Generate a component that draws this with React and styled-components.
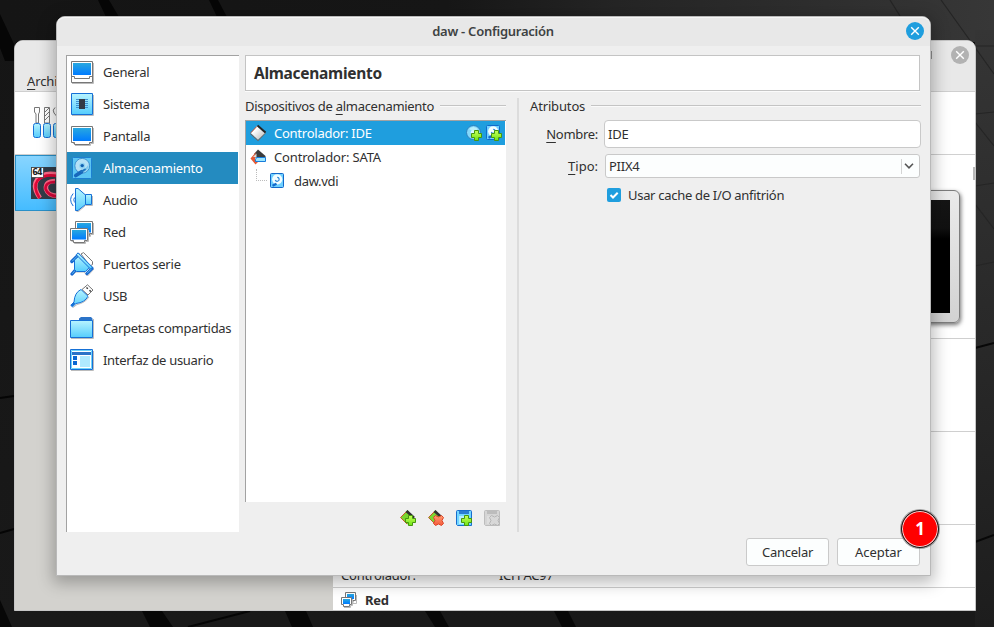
import React from "react";
import styled, { createGlobalStyle, css } from "styled-components";

const Global = createGlobalStyle`
  *, *::before, *::after { box-sizing: border-box; }
  body { margin: 0; overflow: hidden; }
`;

/* ---------- text ---------- */
const Text = styled.span`
  letter-spacing: ${(p) => p.$track ?? -0.2}px;
  font-size: ${(p) => p.$size ?? 13}px;
  font-weight: ${(p) => p.$weight ?? 400};
  white-space: pre;
`;
const Mnemonic = styled.span`
  text-decoration: underline;
  text-decoration-thickness: 1px;
  text-underline-offset: 3px;
`;

/* ---------- desktop ---------- */
const Desktop = styled.main`
  position: relative;
  width: 994px;
  height: 627px;
  overflow: hidden;
  color: #303030;
  font: 13px/18px "Noto Sans", "Open Sans", sans-serif;
  background: linear-gradient(180deg, #151515, #191919);
`;
const Wallpaper = styled.svg`
  position: absolute;
  inset: 0;
`;

/* ---------- manager window ---------- */
const Manager = styled.section`
  position: absolute;
  left: 14px;
  top: 40px;
  width: 962px;
  height: 571px;
  display: flex;
  flex-direction: column;
  border: 1px solid #c6c6c6;
  border-radius: 9px 9px 0 0;
  background: #fff;
  overflow: hidden;
`;
const ManagerTop = styled.header`
  flex: none;
  height: 51px;
  display: flex;
  justify-content: space-between;
  background: #e8e8e8;
  border-bottom: 1px solid #cfcfcf;
  padding: 5px 6px 0 12px;
`;
const MenuEntry = styled.div`
  padding-top: 26px;
`;
const ManagerButtons = styled.div`
  display: flex;
  gap: 19px;
  align-items: flex-start;
`;
const MaximizeEdge = styled.i`
  width: 1px;
  height: 8px;
  margin-top: 5px;
  background: #909090;
`;
const ManagerTools = styled.div`
  flex: none;
  height: 63px;
  padding: 15px 0 0 18px;
  border-bottom: 1px solid #d0d0d0;
  background: #fff;
`;
const ManagerBody = styled.div`
  flex: 1;
  display: grid;
  grid-template-columns: 318px 1fr;
`;
const MachineList = styled.div`
  background: #d3d2ce;
`;
const Machine = styled.div`
  height: 56px;
  padding: 11px 0 0 15px;
  border: 1px solid #2990c8;
  background: linear-gradient(#88d5ff, #45bcff);
`;
const Details = styled.div`
  display: flex;
  flex-direction: column;
`;
const Section = styled.div`
  flex: none;
  position: relative;
  height: ${(p) => p.$h}px;
  border-bottom: ${(p) => (p.$last ? "0" : "1px solid #cfcfcf")};
`;
const ScrollMark = styled.i`
  position: absolute;
  right: 0;
  top: 12px;
  width: 2px;
  height: 13px;
  background: #b8b8b8;
`;
const Preview = styled.div`
  width: 150px;
  height: 133px;
  margin: 35px 15px 0 auto;
  padding: 9px;
  border: 1px solid #7c7c7c;
  border-radius: 6px;
  background: linear-gradient(#ebebeb, #d2d2d2);
  box-shadow: 1px 2px 4px rgba(0, 0, 0, 0.55);
`;
const Screen = styled.div`
  height: 100%;
  border-left: 1px solid #222;
  background: linear-gradient(#151515, #111 25%, #000 35%);
`;
const DetailRow = styled.div`
  position: absolute;
  left: 8px;
  bottom: 3px;
  display: grid;
  grid-template-columns: 158px auto;
`;
const SectionTitle = styled.div`
  display: flex;
  align-items: center;
  gap: 8px;
  padding: 3px 0 0 8px;
`;

/* ---------- dialog ---------- */
const Dialog = styled.section`
  position: absolute;
  left: 56px;
  top: 16px;
  width: 875px;
  height: 560px;
  display: flex;
  flex-direction: column;
  border: 1px solid #b9b9b9;
  border-radius: 9px 9px 0 0;
  background: #efefef;
  box-shadow: 0 4px 16px 3px rgba(0, 0, 0, 0.27);
`;
const TitleBar = styled.header`
  flex: none;
  height: 29px;
  display: grid;
  grid-template-columns: 1fr auto 1fr;
  align-items: center;
  padding: 0 6px 0 5px;
  border-radius: 8px 8px 0 0;
  background: #e8e8e8;
  box-shadow: inset 0 1px #f5f5f5;
`;
const CloseButton = styled.button`
  display: block;
  justify-self: end;
  grid-column: 3;
  width: 18px;
  height: 18px;
  margin-top: -1px;
  padding: 0;
  border: 0;
  border-radius: 50%;
  background: ${(p) => (p.$active ? "#1f9ede" : "#b2b2b2")};
`;
const ManagerClose = styled(CloseButton)`
  margin-top: 0;
`;
const WindowTitle = styled.div`
  grid-column: 2;
  padding-bottom: 2px;
  color: #3e4243;
`;
const DialogBody = styled.div`
  display: grid;
  grid-template-columns: 173px 676px;
  gap: 6px;
  height: 486px;
  padding: 9px 9px 0;
`;
const Sidebar = styled.nav`
  border: solid #a2a2a2;
  border-width: 1px 0 0 1px;
  padding-right: 1px;
  background: #fff;
`;
const NavItem = styled.div`
  display: flex;
  align-items: center;
  gap: 9px;
  height: 32px;
  padding-left: 3px;
  ${(p) => p.$selected && css`background: #248bc0; color: #fff;`}
`;
const Main = styled.div`
  display: flex;
  flex-direction: column;
  gap: 7px;
`;
const PageHeader = styled.div`
  flex: none;
  display: flex;
  align-items: center;
  height: 36px;
  margin-right: 1px;
  padding-left: 8px;
  border: 1px solid #c4c4c4;
  background: #fff;
  box-shadow: 0 1px #fbfbfb;
`;
const Panes = styled.div`
  flex: 1;
  display: flex;
  gap: 11px;
`;
const Divider = styled.div`
  width: 2px;
  background: #dcdcdc;
`;
const DevicePane = styled.div`
  width: 261px;
`;
const AttributePane = styled.div`
  width: 391px;
`;
const GroupTitle = styled.div`
  display: flex;
  align-items: center;
  gap: 6px;
  height: 16px;
  margin-bottom: 6px;
  &::after {
    content: "";
    flex: 1;
    height: 2px;
    margin-top: -1px;
    border-top: 1px solid #c4c4c4;
    border-bottom: 1px solid #fafafa;
  }
`;
const Tree = styled.div`
  height: 382px;
  border: solid #a2a2a2;
  border-width: 1px 0 0 1px;
  padding-right: 1px;
  background: #fff;
`;
const TreeRow = styled.div`
  display: flex;
  align-items: center;
  gap: 8px;
  height: 24px;
  padding: 0 3px 0 4px;
  ${(p) => p.$selected && css`background: #1f9ede; color: #fff;`}
`;
const RowActions = styled.div`
  display: flex;
  gap: 4px;
  margin-left: auto;
`;
const Branch = styled.i`
  align-self: flex-start;
  width: 11px;
  height: 12px;
  margin: 0 -5px 0 6px;
  border: dotted #bcbcbc;
  border-width: 0 0 1px 1px;
`;
const DeviceTools = styled.div`
  display: flex;
  justify-content: flex-end;
  gap: 12px;
  padding: 8px 6px 0 0;
`;
const Form = styled.div`
  display: grid;
  grid-template-columns: 68px 317px;
  column-gap: 6px;
  row-gap: 6px;
  align-items: center;
`;
const FieldLabel = styled.label`
  text-align: right;
`;
const Field = styled.div`
  display: flex;
  align-items: center;
  height: 28px;
  padding-left: 3px;
  border: 1px solid #c9c9c9;
  border-radius: 4px;
  background: #fff;
`;
const Combo = styled(Field)`
  justify-content: space-between;
  height: 24px;
  margin: 0 1px;
  border-radius: 3px;
  background: #fcfefe;
`;
const ComboArrow = styled.span`
  display: flex;
  align-items: center;
  justify-content: center;
  width: 18px;
  height: 15px;
  padding-right: 4px;
  border-left: 1px solid #d4d4d4;
`;
const CheckRow = styled.div`
  grid-column: 2;
  display: flex;
  align-items: center;
  gap: 7px;
  height: 22px;
  padding-left: 3px;
`;
const CheckBox = styled.span`
  display: flex;
  width: 14px;
  height: 14px;
  border-radius: 2px;
  background: #1f9ede;
`;
const Footer = styled.footer`
  display: flex;
  justify-content: flex-end;
  gap: 8px;
  padding: 6px 10px 0 0;
`;
const Button = styled.button`
  width: 83px;
  height: 28px;
  padding: 0;
  border: 1px solid #cacaca;
  border-radius: 3px;
  color: inherit;
  font: inherit;
  background: #fcfefe;
`;
const StepMarker = styled.div`
  position: absolute;
  left: 901px;
  top: 510px;
  width: 38px;
  height: 38px;
  display: flex;
  align-items: center;
  justify-content: center;
  padding-bottom: 1px;
  border: 1px solid #1a1a1a;
  border-radius: 50%;
  background: #f00;
  color: #fff;
  box-shadow: inset 0 0 0 1px #f3dada, 0 0 0 1px rgba(110, 110, 110, 0.6);
`;

/* ---------- icons ---------- */
const Svg = styled.svg`
  display: block;
  flex: none;
  overflow: visible;
`;
const Icon = ({ size = 24, children }) => (
  <Svg width={size} height={size} viewBox={`0 0 ${size} ${size}`} fill="none">{children}</Svg>
);
const Defs = () => (
  <Wallpaper width="0" height="0">
    <defs>
      <linearGradient id="screen" x2="0" y2="1"><stop stopColor="#28a8e0" /><stop offset="1" stopColor="#007bff" /></linearGradient>
      <linearGradient id="aqua" x2="0" y2="1"><stop stopColor="#b8f4ff" /><stop offset="1" stopColor="#55cdfd" /></linearGradient>
      <linearGradient id="chip" x2="1" y2="1"><stop offset=".3" stopColor="#fff" /><stop offset="1" stopColor="#b4b4b4" /></linearGradient>
      <linearGradient id="green" x2="0" y2="1"><stop stopColor="#c8ff58" /><stop offset="1" stopColor="#6ee416" /></linearGradient>
      <linearGradient id="red" x2="0" y2="1"><stop stopColor="#ff9a70" /><stop offset="1" stopColor="#f4593a" /></linearGradient>
    </defs>
  </Wallpaper>
);
const Blue = { stroke: "#1670d6", fill: "url(#aqua)" };
const Monitor = () => (
  <>
    <path d="M2.500 13.500H5.500V15.500H16.500V13.500H19.500V2" stroke="#b9b9b9" />
    <path d="M1.500 .5H18.500V12.500H15.500V14.500H4.500V12.500H1.500Z" fill="#fff" stroke="#777" />
    <path d="M3 2H17V11.500H3Z" fill="url(#screen)" />
  </>
);
const GeneralIcon = () => (
  <Icon>
    <path d="M2 23.500H23.500V3" stroke="#bbb" />
    <path d="M1.500 1.500H22.500V22.500H1.500Z" fill="#fff" stroke="#777" />
    <path d="M3 3H21V15H3Z" fill="url(#screen)" />
    <path d="M1.500 16.500H4.500V18.500H19.500V16.500H22.500" stroke="#777" />
  </Icon>
);
const SystemIcon = () => (
  <Icon>
    <path d="M2 23.500H23.500V3" stroke="#bbb" />
    <path d="M1.500 1.500H22.500V22.500H1.500Z" {...Blue} />
    <path d="M6 7.500H18M6 9.500H18M6 11.500H18M6 13.500H18M6 15.500H18" stroke="#3d8fd0" />
    <path d="M9 7H15V17H9Z" fill="#333b46" />
  </Icon>
);
const DisplayIcon = () => (
  <Icon>
    <path d="M3 19.500H4M5 21.500H20.500V19.500H23.500V4" stroke="#bbb" />
    <path d="M1.500 2.500H22.500V18.500H19.500V20.500H4.500V18.500H1.500Z" fill="#fff" stroke="#777" />
    <path d="M3 4H21V17H3Z" fill="url(#screen)" />
  </Icon>
);
const DiskIcon = () => (
  <Icon>
    <rect x="2.500" y="1.500" width="19" height="21" rx="1" stroke="#1c80d2" fill="#5cc6f4" />
    <circle cx="12.200" cy="9.800" r="7.400" fill="#b5e1f6" stroke="#3f93d0" />
    <path d="M12.500 13.500Q17 12 18.500 8Q19 14 13.500 16.500Z" fill="#7cc8ee" />
    <circle cx="12.200" cy="9.800" r="3" fill="#8fd2f2" />
    <circle cx="12.200" cy="9.600" r="1.700" fill="#0f5fb0" />
    <path d="M5.800 19.500L11.500 15.800" stroke="#1768bd" strokeWidth="3.800" strokeLinecap="round" />
    <path d="M11.500 15.500L15 13.500" stroke="#1f74c0" strokeWidth="1.800" strokeLinecap="round" />
  </Icon>
);
const AudioIcon = () => (
  <Icon>
    <path d="M6.500 23.500H8.500L15.500 17.500H22.500V8" stroke="#bbb" />
    <path d="M3.200 5.500Q-2 11.500 3.200 18M6 8.500Q1.500 11.500 6 15.500" stroke="#1670d6" />
    <path d="M5.500 .5H8L15.500 7V16.500L8 22.500H5.500Z" {...Blue} />
    <path d="M15.500 6.500H21.500V16.500H15.500Z" {...Blue} />
  </Icon>
);
const NetworkIcon = () => (
  <Icon>
    <g transform="translate(4 1)"><Monitor /></g>
    <g transform="translate(-1 8)"><Monitor /></g>
  </Icon>
);
const SerialIcon = () => (
  <Icon>
    <path d="M11 2L13.500 .6L22.500 9.500V12.500L20 14Z" fill="#fff" stroke="#777" />
    <path d="M2 23L6 20H14L17.500 24L24 17" stroke="#bbb" />
    <path d="M2 22L5 18.500M17 21.500L22 16.300M1.800 9.500L8.500 2.800" stroke="#1466cf" strokeWidth="3.200" strokeLinecap="round" />
    <path d="M2.300 21.700L5 18.500M17 21.300L21.700 16.600M2.200 9.200L8.200 3.200" stroke="#62bdf2" />
    <path d="M4.500 8L9.500 3.500L20.300 14.500L15.500 19.500H6.500L4.500 17.500Z" {...Blue} />
    <path d="M8 .8L22.500 15.300L20.500 17L6.300 2.800Z" {...Blue} />
  </Icon>
);
const UsbIcon = () => (
  <Icon>
    <path d="M17.500 .8L23 6L18 11L12 5.500Z" fill="#fff" stroke="#777" />
    <path d="M16.500 3.500L17.800 4.800M19.500 6.300L20.800 7.600" stroke="#333" strokeWidth="1.400" />
    <path d="M3 23.500L7 20.500Q15 19 19 13" stroke="#bbb" />
    <path d="M11 5.500L18 12.200Q15 18.500 6 19.500L2.500 22.800L.8 21.300L4 18Q4.500 8.500 11 5.500Z" {...Blue} />
    <path d="M1.500 22L4.500 19" stroke="#1670d6" strokeWidth="2" />
  </Icon>
);
const FolderIcon = () => (
  <Icon>
    <path d="M1 22.500H23.500V3" stroke="#bbb" />
    <path d="M9 4V2.500L11 1H21L22.500 2.500V5H9Z" fill="#2b73c8" />
    <path d="M.5 4.500H22.500V21.500H.5Z" {...Blue} />
  </Icon>
);
const InterfaceIcon = () => (
  <Icon>
    <path d="M1 22.500H23.500V3" stroke="#bbb" />
    <path d="M.5 1.500H22.500V21.500H.5Z" fill="#fff" stroke="#1670d6" />
    <path d="M1.500 2.500H21.500V20.500H1.500Z" stroke="#70d4fb" />
    <path d="M2 4H21V7H2Z" fill="#2b73c8" />
    <path d="M3 8H7V12H3ZM3 13H7V17H3Z" fill="#0b67d2" />
    <path d="M10 8H20V19H10Z" fill="#b0eaff" />
  </Icon>
);
const SmallNetworkIcon = () => (
  <Icon size={16}>
    <path d="M6 11.500H15.500V3" stroke="#bbb" />
    <path d="M4.500 .5H14.500V8.500H12V10.500H6V8.500H4.500Z" fill="#fff" stroke="#777" />
    <path d="M6 2H13V7H6Z" fill="url(#screen)" />
    <path d="M3 15.500H9.500V13.500H11.500V7" stroke="#bbb" />
    <path d="M.5 5.500H10.500V12.500H8.500V14.500H2.500V12.500H.5Z" fill="#fff" stroke="#777" />
    <path d="M2 7H9V12H2Z" fill="url(#screen)" />
  </Icon>
);
const Plus = () => (
  <path d="M8.500 5.500H12.500V8.500H15.500V12.500H12.500V15.500H8.500V12.500H5.500V8.500H8.500Z" fill="url(#green)" stroke="#46960f" />
);
const Cross = () => (
  <path d="M7.500 5.500L10.500 7L13.500 5.500L15.500 7.500L14 10.500L15.500 13.500L13.500 15.500L10.500 14L7.500 15.500L5.500 13.500L7 10.500L5.500 7.500Z" fill="url(#red)" stroke="#dc4628" />
);
const IdeIcon = () => (
  <Icon size={16}>
    <path d="M.5 8.500L8 15.500L15.500 7.500" stroke="#666" strokeWidth="1.200" />
    <path d="M7 1L15 8L8 14.800L.8 8Z" fill="url(#chip)" />
    <path d="M7.500 .6L15.500 7.600" stroke="#262626" strokeWidth="2" />
    <path d="M6.800 1.500L.8 7.800" stroke="#c4492a" />
  </Icon>
);
const SataIcon = () => (
  <Icon size={16}>
    <path d="M8 .5L15.500 7V8.500H5L4 5Z" fill="#3c3c3c" />
    <path d="M6 3L.5 9.500L5.500 15.500L8 13L5 10V7Z" fill="#e45a36" />
    <path d="M3 8L6.500 4.500V8Z" fill="#ddd" />
    <path d="M6.500 8.500H15.500V12.500H5.500V10.500Z" fill="#9ce6ff" stroke="#177cdb" />
  </Icon>
);
const SmallDisk = () => (
  <>
    <rect x=".5" y=".5" width="13" height="14" rx="1" fill="#6fd0ff" stroke="#1269cb" />
    <circle cx="7.200" cy="6.300" r="5.100" fill="#f4fdff" />
    <path d="M7.200 4.300A2 2 0 1 1 5.300 7" stroke="#2a86d8" strokeWidth="1.200" />
    <path d="M2.500 12.800L6.500 10.800" stroke="#1269cb" strokeWidth="2.200" />
  </>
);
const AddOpticalIcon = () => (
  <Icon size={16}>
    <circle cx="7.500" cy="7.500" r="7" fill="#84d8fa" stroke="#2b7fbd" />
    <path d="M3 4Q7 0 12 4L8 7Z" fill="#baf0fb" />
    <circle cx="7" cy="7.500" r="2.300" fill="#d8f8ff" />
    <Plus />
  </Icon>
);
const AddDiskIcon = () => <Icon size={16}><SmallDisk /><Plus /></Icon>;
const ControllerBase = () => (
  <>
    <path d="M7.500 0L.5 7.500L7.500 14.500L13 8Z" fill="#7bd62f" />
    <path d="M7.500 0L15 7L13 8.500L5.500 2Z" fill="#303030" />
    <path d="M6 2L.5 7.500L7 14" stroke="#c9552c" />
  </>
);
const Floppy = ({ muted }) => (
  <>
    <path d="M.5 1.500Q.5 .5 1.500 .5H14.500Q15.500 .5 15.500 1.500V15.500H1.500L.5 14.500Z" fill={muted ? "#d5d5d5" : "#72d6ff"} stroke={muted ? "#bdbdbd" : "#176dce"} />
    <path d="M3 1H13V4H3Z" fill={muted ? "#bcbcbc" : "#2b7cd2"} />
    <path d="M3 6H13V14H3Z" fill={muted ? "#dedede" : "#b5eeff"} />
  </>
);
const MutedCross = () => (
  <path d="M7.500 5.500L10.500 7L13.500 5.500L15.500 7.500L14 10.500L15.500 13.500L13.500 15.500L10.500 14L7.500 15.500L5.500 13.500L7 10.500L5.500 7.500Z" fill="#d8d8d8" stroke="#b6b6b6" />
);
const Xmark = () => (
  <Icon size={18}><path d="M5.200 5.200L12.800 12.800M12.800 5.200L5.200 12.800" stroke="#fff" strokeWidth="1.400" /></Icon>
);
const ToolsIcon = () => (
  <Svg width="40" height="32" viewBox="0 0 40 32" fill="none">
    <path d="M1.500 .5H6.500V5L5.500 7V16H3V7L1.500 5Z" fill="#fff" stroke="#777" />
    <path d="M11.500 .5H16.500V16H11.500ZM12 5L16 1M12 9L16 5M12 13L16 9" fill="#fff" stroke="#777" />
    <path d="M22 .5Q19 3 21 6L23.500 9V16" stroke="#777" />
    <rect x=".5" y="16.500" width="7" height="14" rx="2" {...Blue} />
    <rect x="10.500" y="16.500" width="7" height="14" rx="2" {...Blue} />
    <rect x="20.500" y="16.500" width="7" height="14" rx="2" {...Blue} />
  </Svg>
);
const BadgeText = styled.text`
  font: bold 8px "DejaVu Sans", sans-serif;
  fill: #222;
`;
const DebianIcon = () => (
  <Icon size={32}>
    <path d="M0 0H32V32H0Z" fill="#323c48" />
    <path d="M9 31Q1 20 6 13Q13 4 28 8" stroke="#ff6a88" strokeWidth="4.500" />
    <path d="M8.500 31Q1.500 20 6.500 13.500Q14 6 28 9.500" stroke="#e00838" strokeWidth="2.600" />
    <path d="M32 28Q18 31 15 22Q14 14 24 14" stroke="#ff6a88" strokeWidth="4.500" />
    <path d="M32 29Q18 31 14.500 22Q14 15 24 15" stroke="#d8063a" strokeWidth="2.600" />
    <path d="M.5 .5H12.500V10.500H.5Z" fill="#fff" stroke="#222" strokeWidth=".6" />
    <BadgeText x="1.200" y="8.300" textLength="10.500">64</BadgeText>
  </Icon>
);

const sections = [
  ["General", GeneralIcon, -0.2],
  ["Sistema", SystemIcon, -0.24],
  ["Pantalla", DisplayIcon, -0.24],
  ["Almacenamiento", DiskIcon, -0.28],
  ["Audio", AudioIcon, -0.15],
  ["Red", NetworkIcon, -0.2],
  ["Puertos serie", SerialIcon, -0.2],
  ["USB", UsbIcon, -0.3],
  ["Carpetas compartidas", FolderIcon, -0.3],
  ["Interfaz de usuario", InterfaceIcon, -0.3],
];

const Backdrop = () => (
  <Wallpaper width="994" height="627">
    <defs>
      <linearGradient id="sky"><stop stopColor="#151515" /><stop offset=".45" stopColor="#171717" /><stop offset=".62" stopColor="#252525" /><stop offset="1" stopColor="#373737" /></linearGradient>
      <linearGradient id="side" x2="0" y2="1"><stop stopColor="#353535" /><stop offset="1" stopColor="#1d1d1d" /></linearGradient>
    </defs>
    <path d="M0 0H994V42H0Z" fill="url(#sky)" />
    <path d="M975 30H994V627H975Z" fill="url(#side)" />
    <path d="M0 14L14 44V61H5L0 48ZM98 0H109L119 17H106ZM209 0H218L227 17H217Z" fill="#060606" />
    <path d="M0 398L14 396M0 533L14 529M188 627L250 611" stroke="#050505" strokeWidth="2" />
    <path d="M0 600L12 627H0ZM142 611H162L173 627H150ZM285 611H306L313 627H292ZM425 611H440L449 627H435ZM554 611H568L576 627H562Z" fill="#070707" />
    <path d="M890 0L900 16M941 0L974 46L994 74M975 46H994M975 114L994 112M975 122L994 146M975 186L994 183M975 204L994 229M975 266L994 262" stroke="#252525" strokeWidth="1.200" />
    <path d="M975 348L994 343M975 542L994 535" stroke="#080808" strokeWidth="2" />
  </Wallpaper>
);

export default function App() {
  return (
    <Desktop>
      <Global />
      <Defs />
      <Backdrop />
      <Manager>
        <ManagerTop>
          <MenuEntry><Text $track={-0.1}><Mnemonic>A</Mnemonic>rchivo</Text></MenuEntry>
          <ManagerButtons>
            <MaximizeEdge />
            <ManagerClose aria-label="Cerrar"><Xmark /></ManagerClose>
          </ManagerButtons>
        </ManagerTop>
        <ManagerTools><ToolsIcon /></ManagerTools>
        <ManagerBody>
          <MachineList><Machine><DebianIcon /></Machine></MachineList>
          <Details>
            <Section $h={184}><ScrollMark /><Preview><Screen /></Preview></Section>
            <Section $h={93} />
            <Section $h={93} />
            <Section $h={63}>
              <DetailRow>
                <Text>Controlador:</Text>
                <Text $track={-0.3}>ICH AC97</Text>
              </DetailRow>
            </Section>
            <Section $h={22} $last>
              <SectionTitle><SmallNetworkIcon /><Text $weight={700} $track={-0.3}>Red</Text></SectionTitle>
            </Section>
          </Details>
        </ManagerBody>
      </Manager>

      <Dialog>
        <TitleBar>
          <WindowTitle><Text $weight={600} $track={-0.26}>daw - Configuración</Text></WindowTitle>
          <CloseButton $active aria-label="Cerrar"><Xmark /></CloseButton>
        </TitleBar>
        <DialogBody>
          <Sidebar>
            {sections.map(([name, Glyph, track]) => (
              <NavItem key={name} $selected={name === "Almacenamiento"}>
                <Glyph />
                <Text $track={track}>{name}</Text>
              </NavItem>
            ))}
          </Sidebar>
          <Main>
            <PageHeader><Text $weight={700} $size={15.5} $track={-0.28}>Almacenamiento</Text></PageHeader>
            <Panes>
              <DevicePane>
                <GroupTitle><Text $track={-0.29}>Dispositivos de <Mnemonic>a</Mnemonic>lmacenamiento</Text></GroupTitle>
                <Tree>
                  <TreeRow $selected>
                    <IdeIcon /><Text $track={-0.25}>Controlador: IDE</Text>
                    <RowActions><AddOpticalIcon /><AddDiskIcon /></RowActions>
                  </TreeRow>
                  <TreeRow><SataIcon /><Text $track={-0.16}>Controlador: SATA</Text></TreeRow>
                  <TreeRow><Branch /><Icon size={16}><SmallDisk /></Icon><Text $track={-0.3}>daw.vdi</Text></TreeRow>
                </Tree>
                <DeviceTools>
                  <Icon size={16}><ControllerBase /><Plus /></Icon>
                  <Icon size={16}><ControllerBase /><Cross /></Icon>
                  <Icon size={16}><Floppy /><Plus /></Icon>
                  <Icon size={16}><Floppy muted /><MutedCross /></Icon>
                </DeviceTools>
              </DevicePane>
              <Divider />
              <AttributePane>
                <GroupTitle><Text $track={-0.15}>Atributos</Text></GroupTitle>
                <Form>
                  <FieldLabel><Text $track={-0.3}><Mnemonic>N</Mnemonic>ombre:</Text></FieldLabel>
                  <Field><Text>IDE</Text></Field>
                  <FieldLabel><Text $track={0}><Mnemonic>T</Mnemonic>ipo:</Text></FieldLabel>
                  <Combo>
                    <Text $track={-0.25}>PIIX4</Text>
                    <ComboArrow>
                      <Svg width="10" height="6" viewBox="0 0 10 6" fill="none"><path d="M1 .8L5 4.800L9 .8" stroke="#555" strokeWidth="1.600" /></Svg>
                    </ComboArrow>
                  </Combo>
                  <CheckRow>
                    <CheckBox><Icon size={14}><path d="M3.500 7L6 9.500L10.700 4.700" stroke="#fff" strokeWidth="2" /></Icon></CheckBox>
                    <Text $track={-0.3}>Usar cache de I/O anfitrión</Text>
                  </CheckRow>
                </Form>
              </AttributePane>
            </Panes>
          </Main>
        </DialogBody>
        <Footer>
          <Button><Text $track={-0.25}>Cancelar</Text></Button>
          <Button><Text $track={-0.05}>Aceptar</Text></Button>
        </Footer>
      </Dialog>
      <StepMarker><Text $weight={700} $size={17} $track={0}>1</Text></StepMarker>
    </Desktop>
  );
}
